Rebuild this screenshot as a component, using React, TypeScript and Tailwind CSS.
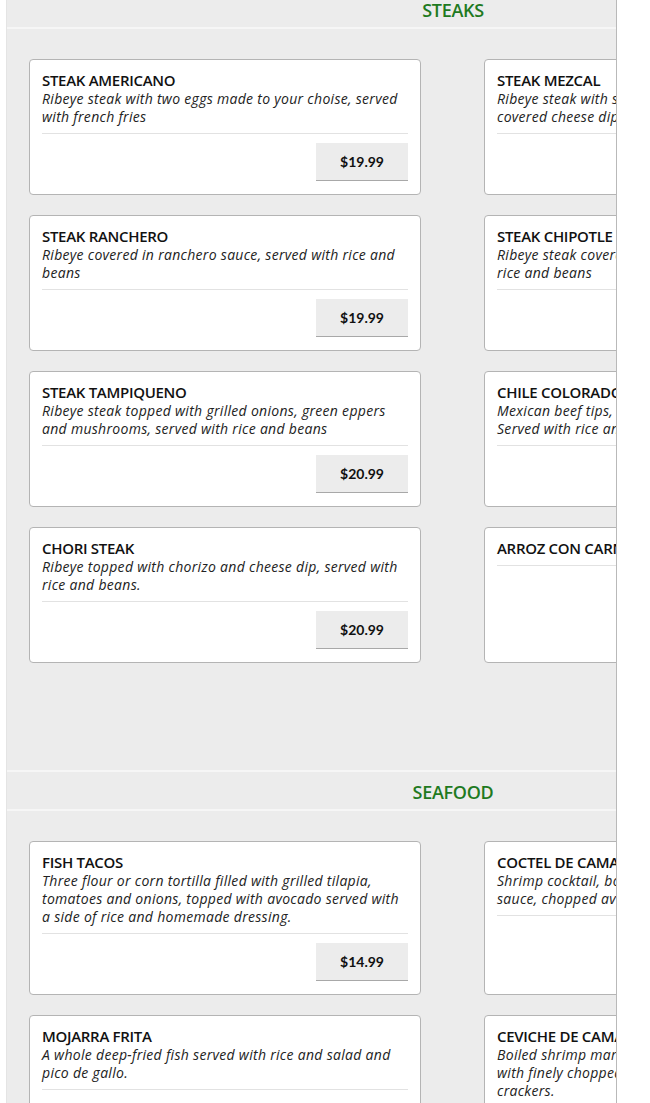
import React from 'react';

interface MenuItem {
  name: string;
  description?: string;
  price: string;
}

interface Section {
  title: string;
  items: MenuItem[];
}

const sections: Section[] = [
  {
    title: 'STEAKS',
    items: [
      {
        name: 'STEAK AMERICANO',
        description: 'Ribeye steak with two eggs made to your choise, served with french fries',
        price: '$19.99'
      },
      {
        name: 'STEAK MEZCAL',
        description: 'Ribeye steak with shrimp, onions and bell peppers, covered cheese dip',
        price: '$21.99'
      },
      {
        name: 'STEAK RANCHERO',
        description: 'Ribeye covered in ranchero sauce, served with rice and beans',
        price: '$19.99'
      },
      {
        name: 'STEAK CHIPOTLE',
        description: 'Ribeye steak covered in spicy chipotle sauce, served with rice and beans',
        price: '$19.99'
      },
      {
        name: 'STEAK TAMPIQUENO',
        description: 'Ribeye steak topped with grilled onions, green eppers and mushrooms, served with rice and beans',
        price: '$20.99'
      },
      {
        name: 'CHILE COLORADO',
        description: 'Mexican beef tips, simmered in a mild red chile sauce. Served with rice and beans',
        price: '$16.99'
      },
      {
        name: 'CHORI STEAK',
        description: 'Ribeye topped with chorizo and cheese dip, served with rice and beans.',
        price: '$20.99'
      },
      {
        name: 'ARROZ CON CARNE',
        price: '$15.99'
      }
    ]
  },
  {
    title: 'SEAFOOD',
    items: [
      {
        name: 'FISH TACOS',
        description:
          'Three flour or corn tortilla filled with grilled tilapia, tomatoes and onions, topped with avocado served with a side of rice and homemade dressing.',
        price: '$14.99'
      },
      {
        name: 'COCTEL DE CAMARON',
        description: 'Shrimp cocktail, boiled shrimp in our special cocktail sauce, chopped avocado and onions.',
        price: '$15.99'
      },
      {
        name: 'MOJARRA FRITA',
        description: 'A whole deep-fried fish served with rice and salad and pico de gallo.',
        price: '$16.99'
      },
      {
        name: 'CEVICHE DE CAMARON',
        description:
          'Boiled shrimp marinated in lime juice, tossed together with finely chopped tomatoes, onions and cilantro. With crackers.',
        price: '$15.99'
      }
    ]
  }
];

const MenuCard: React.FC<{ item: MenuItem }> = ({ item }) => (
  <div className="flex flex-col rounded-[4px] border border-[#b4b4b4] bg-white px-3 pt-[10px] pb-[13px]">
    <h3 className="text-[15px] leading-[20px] font-semibold tracking-[-0.3px] text-[#111]">{item.name}</h3>
    {item.description && (
      <p className="text-[14px] leading-[18px] italic tracking-[0.3px] text-[#222]">{item.description}</p>
    )}
    <div className="mt-[7px] border-t border-[#e2e2e2]" />
    <div className="mt-auto flex justify-end pt-[9px]">
      <button className="h-[38px] w-[92px] border-b border-[#a8a8a8] bg-[#ececec] text-[14px] font-bold text-[#111] [font-family:Lato,sans-serif]">
        {item.price}
      </button>
    </div>
  </div>
);

const MenuSection: React.FC<{ section: Section; first?: boolean }> = ({ section, first }) => (
  <section className={first ? '-mt-[12px] pb-[107px]' : 'pb-[107px]'}>
    <div className="flex h-[41px] items-center justify-center border-y-2 border-[#f6f6f6] pt-[3px]">
      <h2 className="text-[18px] font-semibold tracking-[-0.3px] text-[#1f7a1f]">{section.title}</h2>
    </div>
    <div className="grid grid-cols-[392px_392px] gap-x-[63px] gap-y-[20px] px-[22px] pt-[30px]">
      {section.items.map((item) => (
        <MenuCard key={item.name} item={item} />
      ))}
    </div>
  </section>
);

export default function App() {
  return (
    <div className="min-h-screen bg-white [font-family:'Open_Sans',sans-serif]">
      <div className="ml-[6px] h-[1103px] w-[611px] overflow-hidden border-x border-l-[#e4e4e4] border-r-[#b9b9b9] bg-[#ececec]">
        <div className="w-[892px]">
          {sections.map((section, i) => (
            <MenuSection key={section.title} section={section} first={i === 0} />
          ))}
        </div>
      </div>
    </div>
  );
}
